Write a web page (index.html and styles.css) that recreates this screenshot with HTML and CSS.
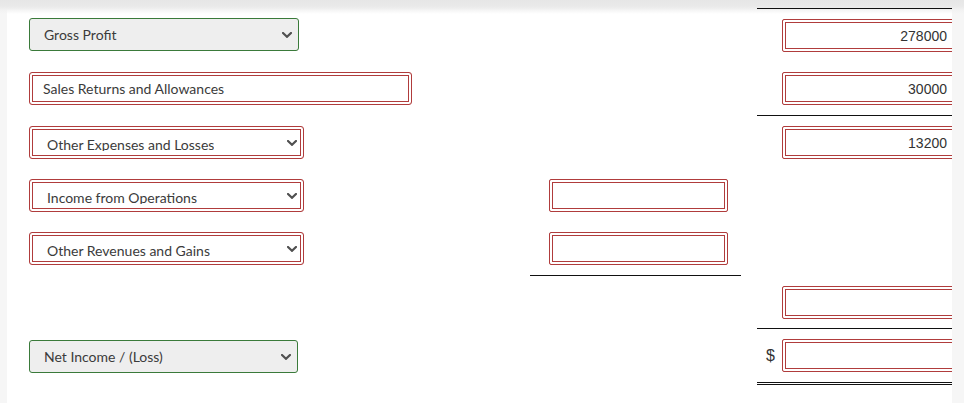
FILE: index.html
```html
<!DOCTYPE html>
<html lang="en">
<head>
<meta charset="utf-8">
<title>Income Statement</title>
<link rel="stylesheet" href="styles.css">
</head>
<body>
<main class="panel">
  <div class="sheet">
    <!-- row 1 -->
    <div class="cell left">
      <div class="select green w-gp"><span class="label">Gross Profit</span><svg class="chev" width="10" height="6" viewBox="0 0 10 6"><path d="M1 1 L5 4.8 L9 1" /></svg></div>
    </div>
    <div class="cell mid"></div>
    <div class="cell right rule-top"><div class="num">278000</div></div>

    <!-- row 2 -->
    <div class="cell left">
      <div class="field w-sr">Sales Returns and Allowances</div>
    </div>
    <div class="cell mid"></div>
    <div class="cell right rule-bottom"><div class="num">30000</div></div>

    <!-- row 3 -->
    <div class="cell left">
      <div class="select red"><span class="label">Other Expenses and Losses</span><svg class="chev" width="10" height="6" viewBox="0 0 10 6"><path d="M1 1 L5 4.8 L9 1" /></svg></div>
    </div>
    <div class="cell mid"></div>
    <div class="cell right"><div class="num">13200</div></div>

    <!-- row 4 -->
    <div class="cell left">
      <div class="select red"><span class="label">Income from Operations</span><svg class="chev" width="10" height="6" viewBox="0 0 10 6"><path d="M1 1 L5 4.8 L9 1" /></svg></div>
    </div>
    <div class="cell mid"><div class="box"></div></div>
    <div class="cell right"></div>

    <!-- row 5 -->
    <div class="cell left">
      <div class="select red"><span class="label">Other Revenues and Gains</span><svg class="chev" width="10" height="6" viewBox="0 0 10 6"><path d="M1 1 L5 4.8 L9 1" /></svg></div>
    </div>
    <div class="cell mid rule-bottom"><div class="box"></div></div>
    <div class="cell right"></div>

    <!-- row 6 -->
    <div class="cell left"></div>
    <div class="cell mid"></div>
    <div class="cell right rule-bottom"><div class="num"></div></div>

    <!-- row 7 -->
    <div class="cell left">
      <div class="select green w-ni low"><span class="label">Net Income / (Loss)</span><svg class="chev" width="10" height="6" viewBox="0 0 10 6"><path d="M1 1 L5 4.8 L9 1" /></svg></div>
    </div>
    <div class="cell mid"></div>
    <div class="cell right total"><div class="money"><span class="cur">$</span><div class="num"></div></div></div>
  </div>
</main>
</body>
</html>
```

FILE: styles.css
```css
html, body {
  margin: 0;
  padding: 0;
}

body {
  background: linear-gradient(to bottom, #e6e6e6 0, #e9e9e9 6px, #f2f2f2 10px, #f6f6f6 14px);
  background-repeat: no-repeat;
  background-color: #f6f6f6;
  height: 403px;
  overflow: hidden;
  font-family: Lato, "Noto Sans", sans-serif;
}

.panel {
  margin: 8px 0 0 7px;
  width: 945px;
  height: 395px;
  overflow: hidden;
  background: linear-gradient(to bottom, #ededed 0, #f7f7f7 3px, #ffffff 6px);
}

.sheet {
  display: grid;
  grid-template-columns: 523px 211px 16px 195px;
  grid-template-rows: 54px 54px 53px 53px 54px 53px 56px;
}

.cell {
  box-sizing: border-box;
  padding-top: 10px;
  min-width: 0;
}

.left {
  grid-column: 1;
  padding-left: 22px;
}

.mid {
  grid-column: 2;
  padding-left: 19px;
}

.right {
  grid-column: 4;
  padding-left: 25px;
}

.rule-top {
  border-top: 1px solid #111;
}

.rule-bottom {
  border-bottom: 1px solid #111;
}

.total {
  border-bottom: 3px double #111;
  padding-left: 9px;
}

/* select-like controls */
.select {
  display: flex;
  align-items: center;
  justify-content: space-between;
  box-sizing: border-box;
  height: 33px;
  width: 275px;
  border-radius: 3px;
  padding: 0 6px 0 14px;
  font-size: 14px;
  color: #3b3b3b;
}

.select .label {
  line-height: 17px;
  white-space: nowrap;
}

.select.green {
  background: #eeeeee;
  border: 1px solid #3a7a3a;
}

.select.low {
  margin-top: 1px;
}

.w-gp { width: 270px; }
.w-ni { width: 269px; }

.select.red {
  border: 1px solid #b03c3c;
  box-shadow: inset 0 0 0 2px #ffffff, inset 0 0 0 3px #b03c3c;
  align-items: flex-start;
  padding: 9px 6px 0 17px;
}

.select.red .label {
  display: block;
  height: 15px;
  overflow: hidden;
}

.select.red .chev {
  align-self: center;
  margin-top: -9px;
}

.chev path {
  fill: none;
  stroke: #505050;
  stroke-width: 2.2;
  stroke-linecap: square;
}

/* text input with double red border */
.field {
  box-sizing: border-box;
  height: 33px;
  border: 1px solid #b03c3c;
  border-radius: 3px;
  box-shadow: inset 0 0 0 2px #ffffff, inset 0 0 0 3px #b03c3c;
  padding-left: 13px;
  line-height: 31px;
  font-size: 14px;
  color: #3b3b3b;
}

.w-sr { width: 383px; }

.box {
  box-sizing: border-box;
  width: 179px;
  height: 33px;
  border: 1px solid #b03c3c;
  border-radius: 2px;
  box-shadow: inset 0 0 0 2px #ffffff, inset 0 0 0 3px #b03c3c;
}

.num {
  box-sizing: border-box;
  width: 180px;
  height: 33px;
  border: 1px solid #b03c3c;
  border-radius: 2px;
  box-shadow: inset 0 0 0 2px #ffffff, inset 0 0 0 3px #b03c3c;
  padding-right: 14px;
  text-align: right;
  font-family: "Liberation Sans", Arial, sans-serif;
  font-size: 14px;
  line-height: 32px;
  color: #333333;
  flex-shrink: 0;
}

.money {
  display: flex;
  align-items: center;
  width: 196px;
}

.cur {
  flex: 0 0 16px;
  width: 16px;
  font-family: "Liberation Sans", Arial, sans-serif;
  font-size: 16px;
  color: #333333;
}
```
